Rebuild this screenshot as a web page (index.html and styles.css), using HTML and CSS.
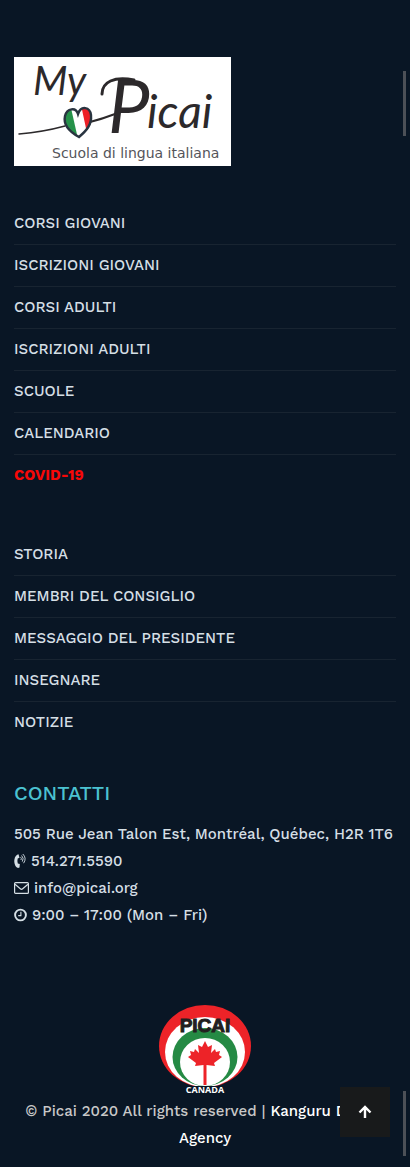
FILE: index.html
```html
<!DOCTYPE html>
<html lang="it">
<head>
<meta charset="utf-8">
<meta name="viewport" content="width=device-width, initial-scale=1">
<title>My Picai</title>
<link rel="stylesheet" href="styles.css">
</head>
<body>
<footer class="footer">
  <a class="brand" href="#" aria-label="My Picai">
    <svg class="brand-logo" viewBox="0 0 217 109">
      <rect width="217" height="109" fill="#fff"/>
      <text class="script script-my" x="19" y="38">My</text>
      <text class="script script-name" x="94" y="76">P</text>
      <text class="script script-rest" x="133" y="71">icai</text>
      <g fill="none" stroke="#2c292b" stroke-linecap="round">
        <path d="M88 37C88 25 100 19 120 23" stroke-width="3"/>
        <path d="M5 77Q29 75 51 69" stroke-width="1.5"/>
        <path d="M76 65Q88 62 101 57" stroke-width="2"/>
      </g>
      <clipPath id="heart"><path d="M65 80C56 75 49 68 51 59C53 51 62 50 64 57C67 48 76 50 77 58C78 68 72 74 65 80Z"/></clipPath>
      <g clip-path="url(#heart)">
        <rect x="49" y="48" width="30" height="34" fill="#fff"/>
        <path d="M48 52L57 51L64 82L48 82Z" fill="#26924a"/>
        <path d="M67 48L80 48L80 80L73 76Z" fill="#ed2027"/>
      </g>
      <path d="M65 80C56 75 49 68 51 59C53 51 62 50 64 57C67 48 76 50 77 58C78 68 72 74 65 80Z" fill="none" stroke="#293440" stroke-width="2.4"/>
      <text class="tagline" x="38" y="101">Scuola di lingua italiana</text>
    </svg>
  </a>

  <nav class="links" aria-label="Corsi">
    <a href="#">CORSI GIOVANI</a>
    <a href="#">ISCRIZIONI GIOVANI</a>
    <a href="#">CORSI ADULTI</a>
    <a href="#">ISCRIZIONI ADULTI</a>
    <a href="#">SCUOLE</a>
    <a href="#">CALENDARIO</a>
    <a class="alert" href="#">COVID-19</a>
  </nav>

  <nav class="links" aria-label="Picai">
    <a href="#">STORIA</a>
    <a href="#">MEMBRI DEL CONSIGLIO</a>
    <a href="#">MESSAGGIO DEL PRESIDENTE</a>
    <a href="#">INSEGNARE</a>
    <a href="#">NOTIZIE</a>
  </nav>

  <section class="contact">
    <h2>CONTATTI</h2>
    <p>505 Rue Jean Talon Est, Montréal, Québec, H2R 1T6</p>
    <p>
      <svg class="icon icon-phone" viewBox="0 0 12 16"><path d="M3.2 1.7L4.5 1.2L5.5 4.7L3.7 5.6Q3 8 3.8 10.6L5.8 11.1L5.5 14.5L4 15Q.8 13.8 .3 9Q.1 3.8 3.2 1.7Z" fill="currentColor"/><path d="M6.6 4.2Q8 5.6 6.9 7M7.6 2.5Q10.3 5.2 8.3 8.6M8.8 1Q13 5.2 9.6 10.2" fill="none" stroke="currentColor" stroke-width=".9"/></svg>
      514.271.5590
    </p>
    <p>
      <svg class="icon icon-mail" viewBox="0 0 15 14"><rect x=".6" y="1.6" width="13.8" height="10.8" rx="1" fill="none" stroke="currentColor" stroke-width="1.2"/><path d="M1 3.2L6.3 7.8Q7.5 8.8 8.7 7.8L14 3.2" fill="none" stroke="currentColor" stroke-width="1.2"/></svg>
      <a href="mailto:info@picai.org">info@picai.org</a>
    </p>
    <p>
      <svg class="icon icon-clock" viewBox="0 0 13 14"><circle cx="6.5" cy="7" r="5.4" fill="none" stroke="currentColor" stroke-width="1.9"/><path d="M6.9 3.8V7.6H4.2" fill="none" stroke="currentColor" stroke-width="1.1"/></svg>
      9:00 – 17:00 (Mon – Fri)
    </p>
  </section>

  <div class="legal">
    <svg class="seal" viewBox="0 0 92 92" role="img" aria-label="Picai Canada">
      <clipPath id="seal-clip"><path d="M0 0H92V81H0Z"/></clipPath>
      <g clip-path="url(#seal-clip)">
        <ellipse cx="46" cy="41" rx="46" ry="41" fill="#ed2328"/>
        <ellipse cx="46" cy="47" rx="40" ry="35" fill="#fff"/>
        <ellipse cx="46" cy="52" rx="32.5" ry="29" fill="#258a44"/>
        <ellipse cx="46" cy="57" rx="25" ry="24" fill="#fff"/>
      </g>
      <path d="M46 36L49 42L53 40L52 48L56 44L57 47L61 46L60 50L63 52L55 58L56 61L47.5 60V80H44.5V60L36 61L37 58L29 52L32 50L31 46L35 47L36 44L40 48L39 40L43 42Z" fill="#ed2328"/>
      <text class="seal-name" x="46" y="27">PICAI</text>
      <text class="seal-country" x="46" y="88">CANADA</text>
    </svg>
    <p>© Picai 2020 All rights reserved | <a href="#">Kanguru Design Agency</a></p>
  </div>
</footer>
<button class="to-top" type="button" aria-label="Torna su">
  <svg viewBox="0 0 14 14"><path d="M7 13V2.5M1.5 7.5L7 2L12.5 7.5" fill="none" stroke="currentColor" stroke-width="2.4"/></svg>
</button>
<div class="thumb thumb-top"></div>
<div class="thumb thumb-bottom"></div>
</body>
</html>
```
FILE: styles.css
```css
* { box-sizing: border-box; }
body {
  margin: 0;
  background: #091625;
  color: #d5dfe5;
  font: 500 15px/27px "Work Sans", Inter, sans-serif;
}
a { color: inherit; text-decoration: none; }
p, h2 { margin: 0; }

.footer {
  display: flex;
  flex-direction: column;
  padding: 57px 14px 15px;
}
.brand { align-self: flex-start; margin-bottom: 37px; }
.brand-logo { display: block; width: 217px; height: 109px; }
.script {
  font-family: Lato, sans-serif;
  font-style: italic;
  font-weight: 400;
  fill: #2c292b;
}
.script-my { font-size: 40px; }
.script-name { font-size: 74px; }
.script-rest { font-size: 46px; }
.tagline { font: 400 14px "DejaVu Sans", sans-serif; fill: #55555a; }

.links { display: flex; flex-direction: column; margin-bottom: 38px; }
.links + .links { margin-bottom: 37px; }
.links a { padding: 7px 0; border-bottom: 1px solid #182431; }
.links a:last-child { border-bottom: 0; }
.links .alert { color: #f70808; font-weight: 700; }

.contact h2 {
  margin-bottom: 15px;
  color: #4bc2d1;
  font-size: 20px;
  font-weight: 500;
  line-height: 26px;
}
.icon { height: 14px; vertical-align: -2px; }
.icon-phone { width: 12px; height: 16px; vertical-align: -3px; }
.icon-mail { width: 15px; }
.icon-clock { width: 13px; }

.legal { margin-top: 76px; color: #c8c8c8; text-align: center; }
.legal a { color: #fff; }
.seal { display: block; width: 92px; height: 92px; margin: 0 auto 1px; }
.seal-name {
  font: 700 19px "Liberation Sans", sans-serif;
  fill: #231f20;
  stroke: #231f20;
  text-anchor: middle;
}
.seal-country { font: 700 9px "Open Sans", sans-serif; fill: #fff; text-anchor: middle; }

.to-top {
  position: fixed;
  right: 20px;
  bottom: 30px;
  display: grid;
  place-items: center;
  width: 50px;
  height: 50px;
  padding: 0;
  border: 0;
  background: #181a1b;
  color: #fff;
}
.to-top svg { width: 14px; height: 14px; }
.thumb { position: absolute; right: 4px; width: 3px; height: 65px; background: #4c5057; }
.thumb-top { top: 71px; }
.thumb-bottom { position: fixed; top: auto; bottom: 11px; }
```
